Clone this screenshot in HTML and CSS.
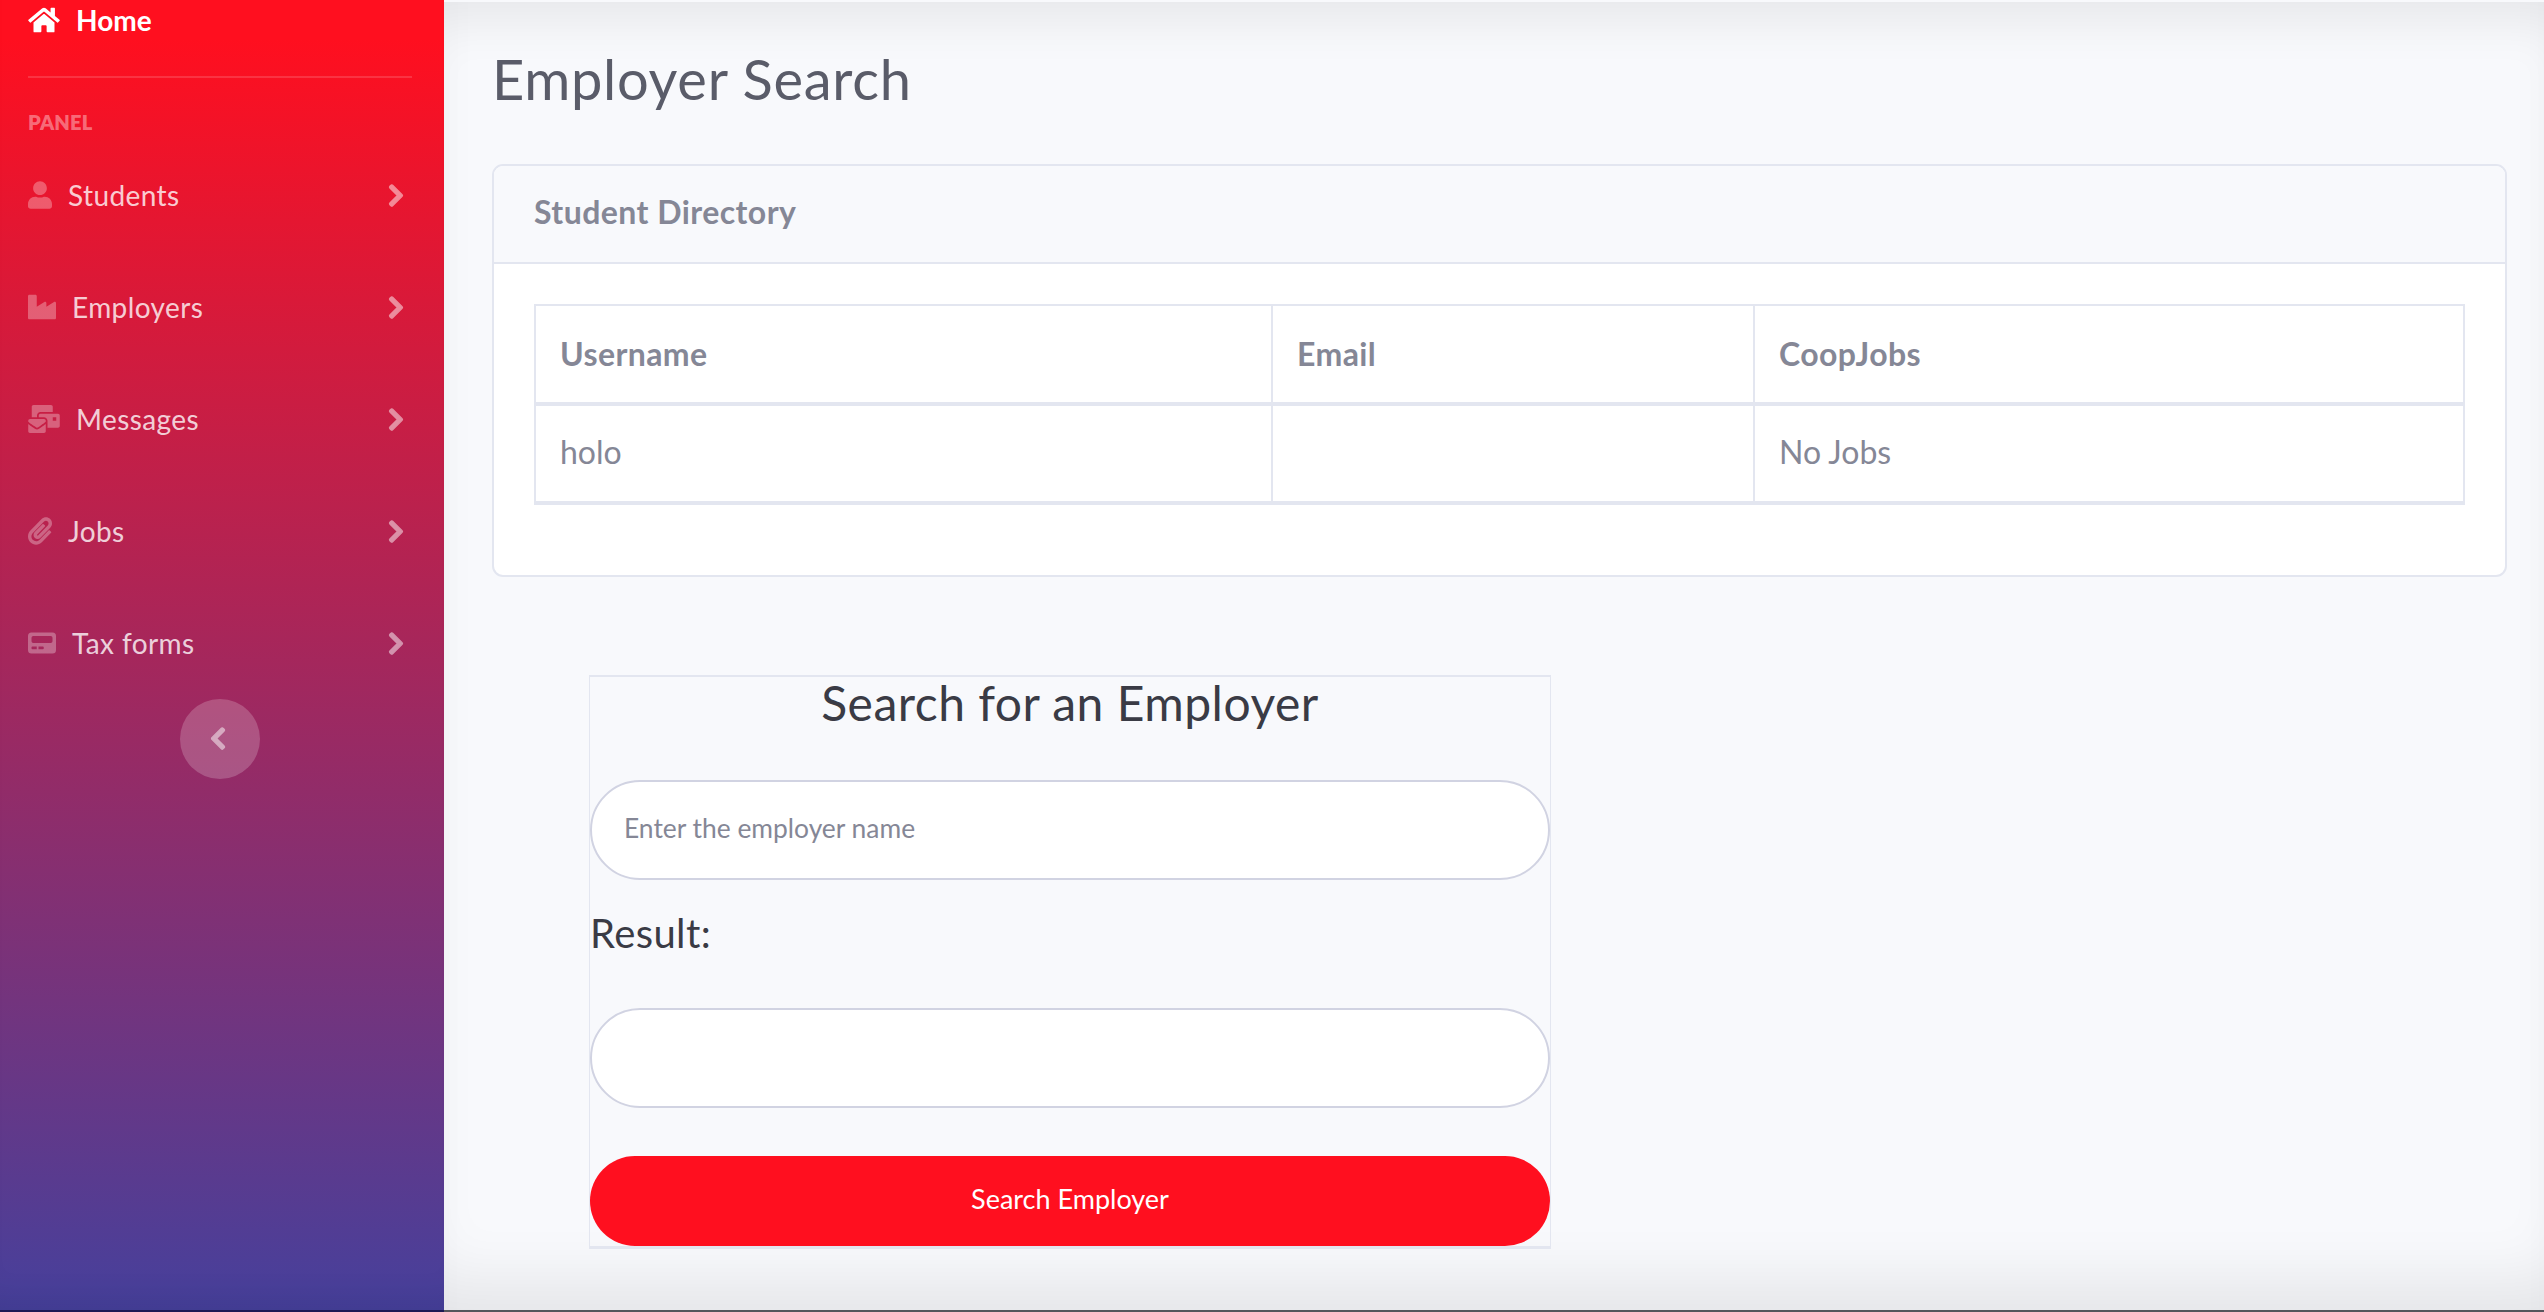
FILE: index.html
```html
<!DOCTYPE html>
<html lang="en">
<head>
    <meta charset="UTF-8">
    <title>Employer Search</title>
    <link rel="stylesheet" href="styles.css">
</head>
<body>
    <div class="sidebar">
        <div class="home-link">
            <svg class="icon home-icon" viewBox="0 0 576 512"><path d="M280.37 148.26L96 300.11V464a16 16 0 0 0 16 16l112.06-.29a16 16 0 0 0 15.92-16V368a16 16 0 0 1 16-16h64a16 16 0 0 1 16 16v95.64a16 16 0 0 0 16 16.05L464 480a16 16 0 0 0 16-16V300L295.67 148.26a12.19 12.19 0 0 0-15.3 0zM571.6 251.47L488 182.56V44.05a12 12 0 0 0-12-12h-56a12 12 0 0 0-12 12v72.61L318.47 43a48 48 0 0 0-61 0L4.34 251.47a12 12 0 0 0-1.6 16.9l25.5 31A12 12 0 0 0 45.15 301l235.22-193.74a12.19 12.19 0 0 1 15.3 0L530.9 301a12 12 0 0 0 16.9-1.6l25.5-31a12 12 0 0 0-1.7-16.93z"/></svg>
            <span>Home</span>
        </div>
        <hr class="divider">
        <div class="panel-title">PANEL</div>
        <div class="nav-item">
            <svg class="icon w24" viewBox="0 0 448 512"><path d="M224 256c70.7 0 128-57.3 128-128S294.7 0 224 0 96 57.3 96 128s57.3 128 128 128zm89.6 32h-16.7c-22.2 10.2-46.9 16-72.9 16s-50.6-5.8-72.9-16h-16.7C60.2 288 0 348.2 0 422.4V464c0 26.5 21.5 48 48 48h352c26.5 0 48-21.5 48-48v-41.6c0-74.2-60.2-134.4-134.4-134.4z"/></svg>
            <span class="nav-text">Students</span>
            <svg class="chevron" viewBox="0 0 320 512"><path d="M285.476 272.971L91.132 467.314c-9.373 9.373-24.569 9.373-33.941 0l-22.667-22.667c-9.357-9.357-9.375-24.522-.04-33.901L188.505 256 34.484 101.255c-9.335-9.379-9.317-24.544.04-33.901l22.667-22.667c9.373-9.373 24.569-9.373 33.941 0L285.475 239.03c9.373 9.372 9.373 24.568.001 33.941z"/></svg>
        </div>
        <div class="nav-item">
            <svg class="icon w28" viewBox="0 0 512 512"><path d="M475.115 163.781L336 252.309v-68.28c0-18.916-20.931-30.399-36.885-20.248L160 252.309V56c0-13.255-10.745-24-24-24H24C10.745 32 0 42.745 0 56v400c0 13.255 10.745 24 24 24h464c13.255 0 24-10.745 24-24V184.029c0-18.917-20.931-30.399-36.885-20.248z"/></svg>
            <span class="nav-text">Employers</span>
            <svg class="chevron" viewBox="0 0 320 512"><path d="M285.476 272.971L91.132 467.314c-9.373 9.373-24.569 9.373-33.941 0l-22.667-22.667c-9.357-9.357-9.375-24.522-.04-33.901L188.505 256 34.484 101.255c-9.335-9.379-9.317-24.544.04-33.901l22.667-22.667c9.373-9.373 24.569-9.373 33.941 0L285.475 239.03c9.373 9.372 9.373 24.568.001 33.941z"/></svg>
        </div>
        <div class="nav-item">
            <svg class="icon w32" viewBox="0 0 576 512"><path d="M160 448c-25.6 0-51.2-22.4-64-32-64-44.8-83.2-60.8-96-70.4V480c0 17.67 14.33 32 32 32h256c17.67 0 32-14.33 32-32V345.6c-12.8 9.6-32 25.6-96 70.4-12.8 9.6-38.4 32-64 32zm128-192H32c-17.67 0-32 14.33-32 32v16c25.6 19.2 22.4 19.2 115.2 86.4 9.6 6.4 28.8 25.6 44.8 25.6s35.2-19.2 44.8-22.4c92.8-67.2 89.6-67.2 115.2-86.4V288c0-17.67-14.33-32-32-32zm256-96H224c-17.67 0-32 14.33-32 32v32h96c33.21 0 60.59 25.42 63.71 57.82l.29-.22V416h192c17.67 0 32-14.33 32-32V192c0-17.67-14.33-32-32-32zm-32 128h-64v-64h64v64zm-352-96c0-35.29 28.71-64 64-64h224V32c0-17.67-14.33-32-32-32H96C78.33 0 64 14.33 64 32v192h96v-32z"/></svg>
            <span class="nav-text">Messages</span>
            <svg class="chevron" viewBox="0 0 320 512"><path d="M285.476 272.971L91.132 467.314c-9.373 9.373-24.569 9.373-33.941 0l-22.667-22.667c-9.357-9.357-9.375-24.522-.04-33.901L188.505 256 34.484 101.255c-9.335-9.379-9.317-24.544.04-33.901l22.667-22.667c9.373-9.373 24.569-9.373 33.941 0L285.475 239.03c9.373 9.372 9.373 24.568.001 33.941z"/></svg>
        </div>
        <div class="nav-item">
            <svg class="icon w24" viewBox="0 0 448 512"><path d="M43.246 466.142c-58.43-60.289-57.341-157.511 1.386-217.581L254.392 34c44.316-45.332 116.351-45.336 160.671 0 43.89 44.894 43.943 117.329 0 162.276L232.214 383.128c-29.855 30.537-78.633 30.111-107.982-.998-28.275-29.97-27.368-77.473 1.452-106.953l143.743-146.835c6.182-6.314 16.312-6.422 22.626-.241l22.861 22.379c6.315 6.182 6.422 16.312.241 22.626L171.427 319.927c-4.932 5.045-5.236 13.428-.648 18.292 4.372 4.634 11.245 4.711 15.688.165l182.849-186.851c19.613-20.062 19.613-52.725-.011-72.798-19.189-19.627-49.957-19.637-69.154 0L90.39 293.295c-34.763 35.56-35.299 93.12-1.191 128.313 34.01 35.093 88.985 35.137 123.058.286l172.06-175.999c6.177-6.319 16.307-6.433 22.626-.256l22.877 22.364c6.319 6.177 6.434 16.307.256 22.626l-172.06 175.998c-59.576 60.938-155.943 60.216-214.77-.485z"/></svg>
            <span class="nav-text">Jobs</span>
            <svg class="chevron" viewBox="0 0 320 512"><path d="M285.476 272.971L91.132 467.314c-9.373 9.373-24.569 9.373-33.941 0l-22.667-22.667c-9.357-9.357-9.375-24.522-.04-33.901L188.505 256 34.484 101.255c-9.335-9.379-9.317-24.544.04-33.901l22.667-22.667c9.373-9.373 24.569-9.373 33.941 0L285.475 239.03c9.373 9.372 9.373 24.568.001 33.941z"/></svg>
        </div>
        <div class="nav-item">
            <svg class="icon w28" viewBox="0 0 512 512"><path d="M448 64H64a64 64 0 0 0-64 64v256a64 64 0 0 0 64 64h384a64 64 0 0 0 64-64V128a64 64 0 0 0-64-64zM160 368H80a16 16 0 0 1-16-16v-16a16 16 0 0 1 16-16h80zm128-16a16 16 0 0 1-16 16h-80v-48h80a16 16 0 0 1 16 16zm160-128a32 32 0 0 1-32 32H96a32 32 0 0 1-32-32v-64a32 32 0 0 1 32-32h320a32 32 0 0 1 32 32z"/></svg>
            <span class="nav-text">Tax forms</span>
            <svg class="chevron" viewBox="0 0 320 512"><path d="M285.476 272.971L91.132 467.314c-9.373 9.373-24.569 9.373-33.941 0l-22.667-22.667c-9.357-9.357-9.375-24.522-.04-33.901L188.505 256 34.484 101.255c-9.335-9.379-9.317-24.544.04-33.901l22.667-22.667c9.373-9.373 24.569-9.373 33.941 0L285.475 239.03c9.373 9.372 9.373 24.568.001 33.941z"/></svg>
        </div>
        <div class="toggle">
            <svg class="chevron" viewBox="0 0 320 512"><path d="M34.52 239.03L228.87 44.69c9.37-9.37 24.57-9.37 33.94 0l22.67 22.67c9.36 9.36 9.37 24.52.04 33.9L131.49 256l154.02 154.75c9.34 9.38 9.32 24.54-.04 33.9l-22.67 22.67c-9.37 9.37-24.57 9.37-33.94 0L34.52 272.97c-9.37-9.37-9.37-24.57 0-33.94z"/></svg>
        </div>
    </div>

    <div class="main">
        <h1>Employer Search</h1>

        <div class="card">
            <div class="card-header">Student Directory</div>
            <div class="card-body">
                <table>
                    <colgroup>
                        <col class="col-user">
                        <col class="col-email">
                        <col class="col-jobs">
                    </colgroup>
                    <thead>
                        <tr>
                            <th>Username</th>
                            <th>Email</th>
                            <th>CoopJobs</th>
                        </tr>
                    </thead>
                    <tbody>
                        <tr>
                            <td>holo</td>
                            <td></td>
                            <td>No Jobs</td>
                        </tr>
                    </tbody>
                </table>
            </div>
        </div>

        <form class="search-box">
            <h3>Search for an Employer</h3>
            <input class="field" type="text" placeholder="Enter the employer name">
            <label class="result-label">Result:</label>
            <input class="field" type="text">
            <button class="search-btn" type="button">Search Employer</button>
        </form>
    </div>
</body>
</html>
```
FILE: styles.css
```css
*{
    box-sizing: border-box;
}
html, body{
    height: 100%;
}
body{
    margin: 0;
    display: flex;
    height: 1312px;
    overflow: hidden;
    font-family: "Lato", "Open Sans", sans-serif;
    background-color: #f8f9fc;
}

/* sidebar */
.sidebar{
    width: 444px;
    flex-shrink: 0;
    padding: 0 32px 0 28px;
    background-image: linear-gradient(180deg, #ff0f1f 3%, #46409c 100%);
    border-bottom: 2px solid #1c1a55;
    box-shadow: inset 0 -34px 30px -22px rgba(0, 0, 0, 0.08);
    color: rgba(255, 255, 255, 0.8);
    font-size: 28px;
    letter-spacing: 0.4px;
}
.icon{
    height: 32px;
    fill: rgba(255, 255, 255, 0.3);
    flex-shrink: 0;
}
.w24{
    width: 24px;
    height: 28px;
}
.w28{
    width: 28px;
    height: 28px;
}
.w32{
    width: 32px;
    height: 28px;
}
.home-link{
    display: flex;
    align-items: center;
    gap: 16px;
    height: 40px;
    color: #fff;
    font-weight: 700;
    letter-spacing: 0;
}
.home-icon{
    width: 32px;
    height: 28px;
    fill: #fff;
}
.divider{
    margin: 36px 0 0;
    border: 0;
    border-top: 2px solid rgba(255, 255, 255, 0.15);
}
.panel-title{
    height: 61px;
    padding-top: 32px;
    font-size: 20px;
    line-height: 24px;
    font-weight: 800;
    letter-spacing: 0.2px;
    color: rgba(255, 255, 255, 0.4);
}
.nav-item{
    display: flex;
    align-items: center;
    gap: 16px;
    height: 112px;
}
.nav-text{
    flex: 1;
}
.chevron{
    width: 16px;
    height: 25px;
    fill: #fff;
    stroke: #fff;
    stroke-width: 26px;
    stroke-linejoin: round;
    opacity: 0.5;
    flex-shrink: 0;
}
.nav-item .chevron{
    margin-right: 8px;
}
.toggle{
    display: flex;
    align-items: center;
    justify-content: center;
    width: 80px;
    height: 80px;
    margin: 0 auto;
    border-radius: 50%;
    background-color: rgba(255, 255, 255, 0.2);
}
.toggle .chevron{
    margin: 0 4px 2px 0;
}

/* main content */
.main{
    flex: 1;
    padding: 43px 37px 0 48px;
    border-top: 2px solid #f8f9fc;
    border-bottom: 2px solid #55565c;
    box-shadow: inset 0 44px 48px -24px rgba(0, 0, 0, 0.07), inset 0 -54px 60px -24px rgba(0, 0, 0, 0.08);
}
h1{
    margin: 0 0 52px;
    font-size: 56px;
    line-height: 67px;
    font-weight: 400;
    letter-spacing: 0.7px;
    color: #5a5c69;
}
.card{
    border: 2px solid #e3e6f0;
    border-radius: 11px;
    background-color: #fff;
}
.card-header{
    height: 98px;
    padding: 0 40px 6px;
    display: flex;
    align-items: center;
    font-size: 32px;
    font-weight: 700;
    letter-spacing: 0.45px;
    color: #858796;
    background-color: #f8f9fc;
    border-bottom: 2px solid #e3e6f0;
    border-radius: 9px 9px 0 0;
}
.card-body{
    padding: 40px 40px 70px;
}
table{
    width: 100%;
    table-layout: fixed;
    border-collapse: collapse;
    font-size: 32px;
    color: #858796;
}
.col-user{
    width: 737px;
}
.col-email{
    width: 482px;
}
th, td{
    padding: 0 24px;
    text-align: left;
    border: 2px solid #e3e6f0;
}
th{
    height: 99px;
    padding-bottom: 2px;
    border-bottom-width: 4px;
    letter-spacing: 0.4px;
}
td{
    height: 99px;
    padding-bottom: 4px;
    border-bottom-width: 4px;
}

.search-box{
    display: flex;
    flex-direction: column;
    width: 962px;
    height: 574px;
    margin: 98px 0 0 97px;
    border: 1px solid #e3e6f0;
    border-width: 2px 1px 3px;
}
h3{
    margin: 0 0 51px;
    font-size: 48px;
    line-height: 52px;
    font-weight: 400;
    letter-spacing: 0.5px;
    text-align: center;
    color: #3a3b45;
}
.field{
    width: 100%;
    height: 100px;
    padding: 0 32px 5px;
    border: 2px solid #d1d3e2;
    border-radius: 50px;
    background-color: #fff;
    font-family: inherit;
    font-size: 26.4px;
    color: #6e707e;
    flex-shrink: 0;
}
.field::placeholder{
    color: #858796;
}
.result-label{
    height: 129px;
    padding-top: 29px;
    font-size: 40px;
    line-height: 48px;
    letter-spacing: 0.4px;
    color: #3a3b45;
}
.search-btn{
    height: 90px;
    margin-top: 48px;
    padding-bottom: 7px;
    border: 0;
    border-radius: 45px;
    background-color: #ff0f1f;
    color: #fff;
    font-family: inherit;
    font-size: 27px;
    flex-shrink: 0;
}
```
